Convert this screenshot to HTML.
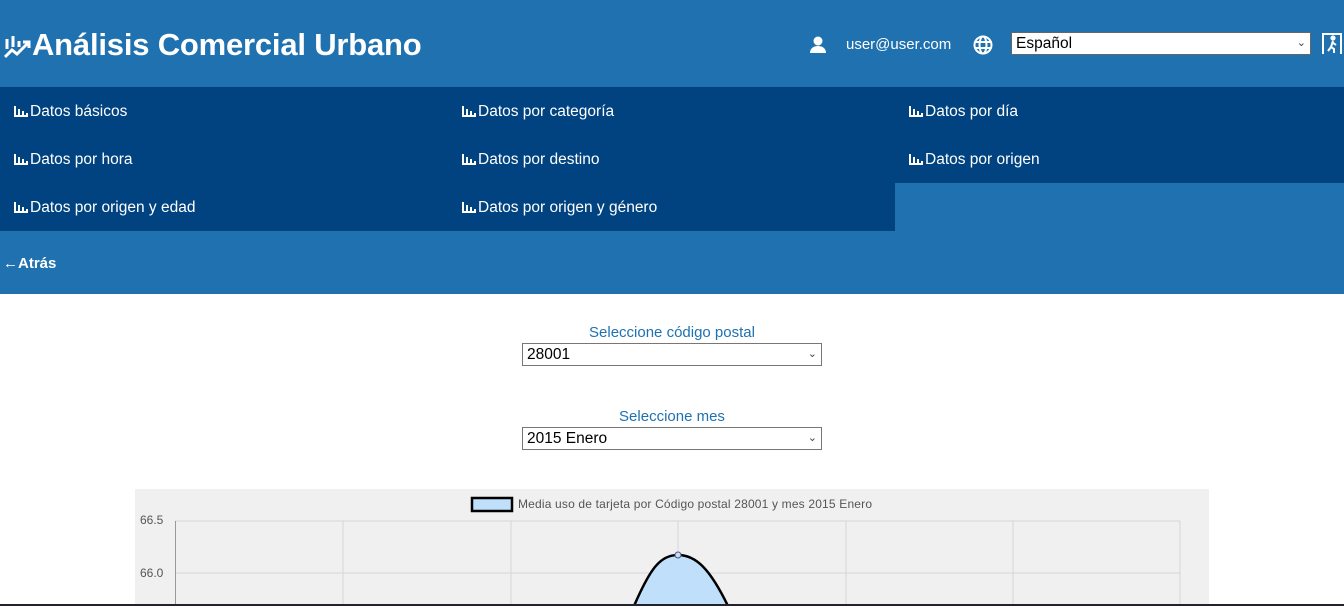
<!DOCTYPE html><html><head><meta charset="utf-8"><style>
body{margin:0;width:1344px;height:606px;overflow:hidden;font-family:"Liberation Sans",sans-serif;background:#fff;position:relative}
.hdr{position:absolute;left:0;top:0;width:1344px;height:87px;background:#1f71b0}
.title{position:absolute;left:32px;top:27px;color:#fff;font-weight:bold;font-size:31px;letter-spacing:-0.2px}
.nav{position:absolute;top:87px;left:0;width:1344px;height:207px;background:#1f71b0}
.nav .c{position:absolute;height:48px;background:#004380;color:#fff;font-size:15.5px;line-height:50px}
.nav .c span{position:absolute;left:14px}
.ic{display:inline-block;width:14px;height:11px;margin-right:2px;vertical-align:-1px;background:linear-gradient(#fff,#fff) 0 0/2px 11px no-repeat,linear-gradient(#fff,#fff) 4px 3px/2px 8px no-repeat,linear-gradient(#fff,#fff) 8px 5px/2px 6px no-repeat,linear-gradient(#fff,#fff) 12px 7px/2px 4px no-repeat,linear-gradient(#fff,#fff) 0 9px/14px 2px no-repeat}
.lbl{position:absolute;color:#1f71b0;font-size:15px;width:300px;text-align:center;left:522px}
.sel{position:absolute;left:522px;width:298px;height:21px;border:1px solid #777;font-size:15.5px;line-height:21px;box-sizing:content-box}
.sel span{margin-left:4px}
.sel i{position:absolute;right:4px;top:0;font-style:normal;font-size:11px;color:#444}
</style></head><body>
<div class="hdr">
<svg style="position:absolute;left:4px;top:35px" width="28" height="24" viewBox="0 0 28 24"><g stroke="#fff" stroke-width="3" fill="none"><path d="M3 4v10M9 1v11M15 6v6"/><path d="M1 22l7-7 5 4 12-12"/><path d="M19 7h6v6"/></g></svg>
<div class="title">Análisis Comercial Urbano</div>
<svg style="position:absolute;left:809px;top:36px" width="18" height="18" viewBox="0 0 18 18"><circle cx="9" cy="5" r="4.5" fill="#fff"/><path d="M1 17c0-5 4-7 8-7s8 2 8 7z" fill="#fff"/></svg>
<div style="position:absolute;left:846px;top:36px;color:#fff;font-size:15px">user@user.com</div>
<svg style="position:absolute;left:973px;top:35px" width="20" height="20" viewBox="0 0 20 20" fill="none" stroke="#fff" stroke-width="2"><circle cx="10" cy="10" r="8.5"/><ellipse cx="10" cy="10" rx="3.5" ry="8.5"/><path d="M2 7h16M2 13h16"/></svg>
<div class="sel" style="left:1011px;top:32px;width:298px;height:21px;background:#fff;border-color:#666"><span>Español</span><i>⌄</i></div>
<svg style="position:absolute;left:1322px;top:33px" width="20" height="22" viewBox="0 0 20 22" fill="none" stroke="#fff" stroke-width="2"><path d="M1 21V1h18v20"/><circle cx="11" cy="5" r="1.6" fill="#fff"/><path d="M11 8l-2 6 3 2v4M9 14l-3 4M10 9l4 3"/></svg>
</div>
<div class="nav">
<div class="c" style="left:0;top:0;width:1344px"><span><i class="ic"></i>Datos básicos</span><span style="left:462px"><i class="ic"></i>Datos por categoría</span><span style="left:909px"><i class="ic"></i>Datos por día</span></div>
<div class="c" style="left:0;top:48px;width:1344px"><span><i class="ic"></i>Datos por hora</span><span style="left:462px"><i class="ic"></i>Datos por destino</span><span style="left:909px"><i class="ic"></i>Datos por origen</span></div>
<div class="c" style="left:0;top:96px;width:895px"><span><i class="ic"></i>Datos por origen y edad</span><span style="left:462px"><i class="ic"></i>Datos por origen y género</span></div>
<div style="position:absolute;left:3px;top:168px;color:#fff;font-weight:bold;font-size:15px">←Atrás</div>
</div>
<div class="lbl" style="top:324px">Seleccione código postal</div>
<div class="sel" style="top:343px"><span>28001</span><i>⌄</i></div>
<div class="lbl" style="top:408px">Seleccione mes</div>
<div class="sel" style="top:427px"><span>2015 Enero</span><i>⌄</i></div>
<svg style="position:absolute;left:135px;top:489px" width="1074" height="117" viewBox="0 0 1074 117">
<rect width="1074" height="117" fill="#f0f0f0"/>
<g stroke="#d6d6d6" stroke-width="1"><path d="M40 32H1045M40 84H1045M208 32V117M376 32V117M543 32V117M711 32V117M878 32V117M1045 32V117"/></g>
<path d="M40.5 32V117" stroke="#999"/>
<rect x="337" y="9" width="40" height="13" fill="#bfdffb" stroke="#000" stroke-width="2.5"/>
<text x="383" y="19" font-family="Liberation Sans,sans-serif" font-size="12" textLength="354" fill="#555">Media uso de tarjeta por Código postal 28001 y mes 2015 Enero</text>
<text x="5" y="35" font-family="Liberation Sans,sans-serif" font-size="12" fill="#555">66.5</text>
<text x="5" y="88" font-family="Liberation Sans,sans-serif" font-size="12" fill="#555">66.0</text>
<path d="M499 117C515 80 525 66 543 66C561 66 575 80 593 117Z" fill="#bfdffb" stroke="#000" stroke-width="2.5"/>
<circle cx="543" cy="66" r="3" fill="#bfdffb" stroke="#557"/>
</svg>
<div style="position:absolute;left:0;top:604px;width:1344px;height:2px;background:#223"></div>
</body></html>
